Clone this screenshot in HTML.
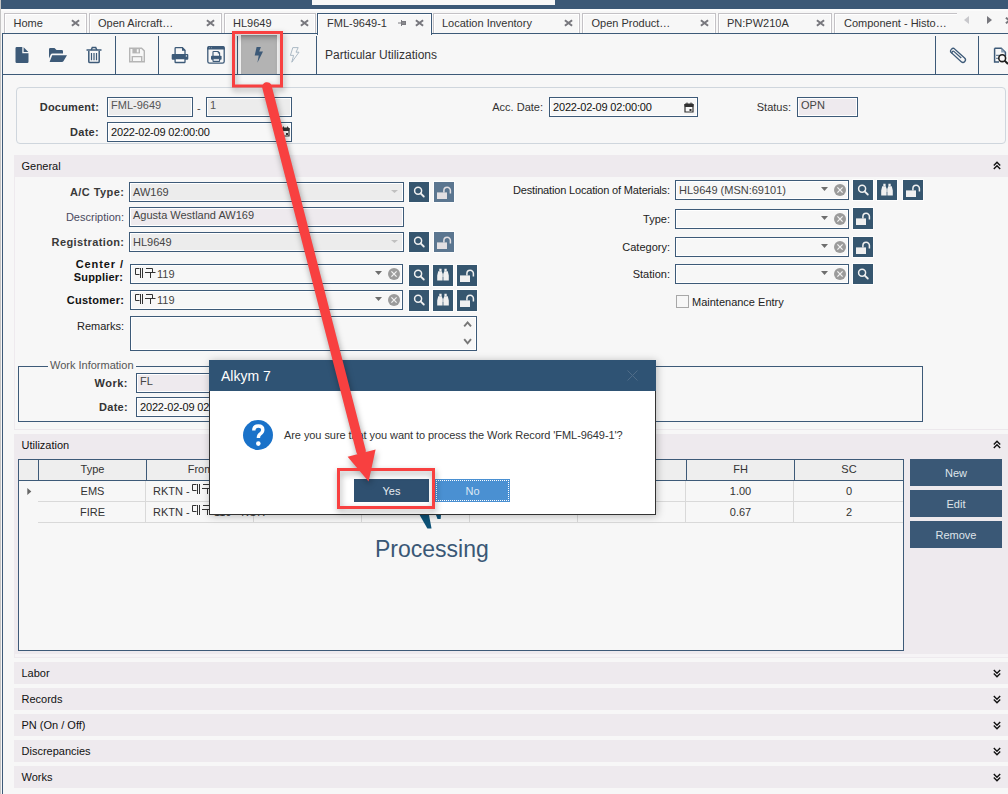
<!DOCTYPE html>
<html><head><meta charset="utf-8">
<style>
*{box-sizing:border-box;margin:0;padding:0}
html,body{width:1008px;height:794px;overflow:hidden;background:#f7f7f7;font-family:"Liberation Sans",sans-serif;font-size:11px;color:#222}
.a{position:absolute}
.t{position:absolute;white-space:nowrap;line-height:12px}
.tab{position:absolute;top:13px;height:21px;border:1px solid #c4c2c6;border-bottom:none;background:#f7f7f7;box-shadow:inset 1px 1px 0 #fff,inset -1px 0 0 #fff}
.tx{position:absolute;top:17px;line-height:12px;white-space:nowrap;color:#333;font-size:11px}
.cl{position:absolute;top:19px;width:9px;height:8px}
.sep{position:absolute;top:36px;width:1px;height:38px;background:#3d5a78}
.fld{position:absolute;border:1px solid #3d5a78;background:#f7f7f7;box-shadow:inset 0 0 0 1px #fff}
.gray{background:#ececec}
.pink{background:#eeeaee}
.hdr{position:absolute;left:14px;width:994px;height:22px;background:#eeeaee}
.hdr .t{left:7.5px;top:5px;color:#111}
.btn{position:absolute;width:20px;height:21px;background:#36566f}
.lbl{position:absolute;text-align:right;white-space:nowrap;line-height:12px;color:#222}
.b{font-weight:bold}
</style></head><body>
<!-- left window edge -->
<div class="a" style="left:0;top:0;width:1px;height:794px;background:#c4c4c4"></div>
<!-- top dark bar -->
<div class="a" style="left:1px;top:0;width:1007px;height:9px;background:#3b5876"></div>
<div class="a" style="left:312px;top:0;width:243px;height:5px;background:#f7f7f7"></div>
<div class="a" style="left:1px;top:9px;width:1007px;height:2px;background:#fbfbfb"></div>

<!-- TABS -->
<!--TABS-->
<div class="tab" style="left:4px;width:83px"></div>
<div class="tx" style="left:13.5px">Home</div>
<svg class="cl" style="left:71px" width="9" height="7" viewBox="0 0 9 7"><path d="M0.9 0.7L8.1 6.3M8.1 0.7L0.9 6.3" stroke="#77777d" stroke-width="2"/></svg>
<div class="tab" style="left:89px;width:133px"></div>
<div class="tx" style="left:98px">Open Aircraft…</div>
<svg class="cl" style="left:206px" width="9" height="7" viewBox="0 0 9 7"><path d="M0.9 0.7L8.1 6.3M8.1 0.7L0.9 6.3" stroke="#77777d" stroke-width="2"/></svg>
<div class="tab" style="left:224px;width:92px"></div>
<div class="tx" style="left:233px">HL9649</div>
<svg class="cl" style="left:300px" width="9" height="7" viewBox="0 0 9 7"><path d="M0.9 0.7L8.1 6.3M8.1 0.7L0.9 6.3" stroke="#77777d" stroke-width="2"/></svg>
<div class="tab" style="left:317px;width:115px;border-color:#3d5a78;height:22px"></div>
<div class="tx" style="left:327px">FML-9649-1</div>
<svg class="cl" style="left:415px" width="9" height="7" viewBox="0 0 9 7"><path d="M0.9 0.7L8.1 6.3M8.1 0.7L0.9 6.3" stroke="#77777d" stroke-width="2"/></svg>
<div class="tab" style="left:433px;width:147px"></div>
<div class="tx" style="left:442px">Location Inventory</div>
<svg class="cl" style="left:564px" width="9" height="7" viewBox="0 0 9 7"><path d="M0.9 0.7L8.1 6.3M8.1 0.7L0.9 6.3" stroke="#77777d" stroke-width="2"/></svg>
<div class="tab" style="left:582px;width:134px"></div>
<div class="tx" style="left:591.5px">Open Product…</div>
<svg class="cl" style="left:700px" width="9" height="7" viewBox="0 0 9 7"><path d="M0.9 0.7L8.1 6.3M8.1 0.7L0.9 6.3" stroke="#77777d" stroke-width="2"/></svg>
<div class="tab" style="left:718px;width:114px"></div>
<div class="tx" style="left:727px">PN:PW210A</div>
<svg class="cl" style="left:816px" width="9" height="7" viewBox="0 0 9 7"><path d="M0.9 0.7L8.1 6.3M8.1 0.7L0.9 6.3" stroke="#77777d" stroke-width="2"/></svg>
<div class="tab" style="left:834px;width:123px;border-right:none;box-shadow:inset 1px 1px 0 #fff"></div>
<div class="tx" style="left:844px">Component - Histo…</div>
<svg class="a" style="left:398px;top:20px" width="8" height="6" viewBox="0 0 8 6"><path d="M0 3H3M3.5 0V6" stroke="#7b7b80" stroke-width="1"/><path d="M4 1H8V5H4Z" fill="#7b7b80"/><path d="M4 3H7" stroke="#b0b0b0" stroke-width="0.6"/></svg>
<svg class="a" style="left:964px;top:16px" width="5" height="8" viewBox="0 0 5 8"><path d="M5 0V8L0 4Z" fill="#c8c8cc"/></svg>
<svg class="a" style="left:987px;top:16px" width="5" height="8" viewBox="0 0 5 8"><path d="M0 0V8L5 4Z" fill="#77777d"/></svg>
<svg class="a" style="left:1005px;top:17px" width="9" height="7" viewBox="0 0 9 7"><path d="M0.9 0.7L8.1 6.3M8.1 0.7L0.9 6.3" stroke="#77777d" stroke-width="2"/></svg>
<!--/TABS-->
<!-- toolbar frame -->
<div class="a" style="left:2px;top:33px;width:315px;height:1px;background:#3d5a78"></div>
<div class="a" style="left:431px;top:33px;width:577px;height:1px;background:#3d5a78"></div>
<div class="a" style="left:2px;top:33px;width:1px;height:761px;background:#3d5a78"></div>
<div class="a" style="left:3px;top:74px;width:1005px;height:1px;background:#3d5a78"></div>


<!-- toolbar separators -->
<div class="sep" style="left:115px"></div>
<div class="sep" style="left:158px"></div>
<div class="sep" style="left:237px"></div>
<div class="sep" style="left:316px"></div>
<div class="sep" style="left:935px"></div>
<div class="sep" style="left:978px"></div>
<!-- highlighted button -->
<div class="a" style="left:241px;top:35px;width:36px;height:39px;background:linear-gradient(#8e8e8e,#a8a8a8 2px,#b3b3b3 5px,#b3b3b3)"></div>
<svg class="a" style="left:0;top:0" width="1008" height="80" viewBox="0 0 1008 80">
 <g fill="#3d5a78">
  <!-- new doc -->
  <path d="M15.5 48.2Q15.5 47 16.7 47H22.3V53.2H28.5V61.8Q28.5 63 27.3 63H16.7Q15.5 63 15.5 61.8Z"/>
  <path d="M23.6 47.2L28.4 52H23.6Z"/>
  <!-- folder -->
  <path d="M49 49.2Q49 48 50.2 48H54.5L56.5 50H61.8Q63 50 63 51.2V53.6H52.6Q51.2 53.6 50.6 54.8L49 58.4Z"/>
  <path d="M52.2 55.2H67L63.4 61.2Q63 62 62 62H49.6Z"/>
  <!-- lightning in gray btn -->
  <path d="M256.6 47H260.9L259.2 51.6H263L257.4 62.8L258.7 55.4H254.7Z"/>
 </g>
 <!-- trash -->
 <g fill="none" stroke="#3d5a78" stroke-width="1.5">
  <path d="M86.5 50H101.5"/>
  <path d="M91.2 50L92.3 47.5H95.7L96.8 50"/>
  <path d="M88.8 51V61.4Q88.8 62.6 90 62.6H98Q99.2 62.6 99.2 61.4V51"/>
  <path d="M91.5 53V60.2M94 53V60.2M96.5 53V60.2" stroke-width="1.2"/>
 </g>
 <!-- print -->
 <path d="M175.1 54.3V48.5Q175.1 47.7 175.9 47.7H182.4L185 50.3V54.3" fill="none" stroke="#3d5a78" stroke-width="1.3"/>
 <path d="M182 47.3L185.5 50.8H182Z" fill="#3d5a78"/>
 <path d="M172.7 54H187.3Q188.3 54 188.3 55V58.8Q188.3 59.8 187.3 59.8H172.7Q171.7 59.8 171.7 58.8V55Q171.7 54 172.7 54Z" fill="#3d5a78"/>
 <circle cx="186.4" cy="55.9" r="0.7" fill="#fff"/>
 <rect x="175.1" y="58.6" width="9.9" height="3.9" rx="0.6" fill="#fff" stroke="#3d5a78" stroke-width="1.3"/>
 <!-- print preview -->
 <rect x="207.8" y="46.6" width="16.4" height="16.6" rx="1.8" fill="none" stroke="#3d5a78" stroke-width="1.3"/>
 <path d="M207.2 48Q207.2 46 209.2 46H222.8Q224.8 46 224.8 48V49.4H207.2Z" fill="#3d5a78"/>
 <path d="M209 47.7H210M211 47.7H212" stroke="#9fb0c0" stroke-width="0.7"/>
 <path d="M213 55.9V52Q213 51.5 213.5 51.5H218L219.6 53.1V55.9" fill="none" stroke="#3d5a78" stroke-width="1.1"/>
 <path d="M217.8 51.2L220 53.4H217.8Z" fill="#3d5a78"/>
 <path d="M211.8 55.8H220.8Q221.6 55.8 221.6 56.6V59Q221.6 59.8 220.8 59.8H211.8Q211 59.8 211 59V56.6Q211 55.8 211.8 55.8Z" fill="#3d5a78"/>
 <rect x="213" y="58.8" width="6.6" height="2.6" rx="0.4" fill="#fff" stroke="#3d5a78" stroke-width="1.1"/>
 <!-- save disabled -->
 <g fill="none" stroke="#b5b5b5" stroke-width="1.4">
  <path d="M129.7 48.2H141.6L144.3 50.9V61.8H129.7Z"/>
  <path d="M132.3 62V56.6H141.7V62"/>
 </g>
 <path d="M132.4 48.2H140V53.4H132.4Z" fill="#b5b5b5"/>
 <path d="M136.8 49.2H138.6V52.4H136.8Z" fill="#f7f7f7"/>
 <!-- outline lightning -->
 <path d="M292.8 47.6H298.2L296 52.2H299L291.8 62.2L293.6 55.4H290.4Z" fill="none" stroke="#a3b2c0" stroke-width="0.9"/>
 <!-- paperclip -->
 <g transform="translate(957 55) rotate(42)" fill="none" stroke="#3d5a78" stroke-width="1.3">
  <path d="M-1 -2.9H7.6A2.5 2.5 0 0 1 7.6 2.1H-6.8A2.5 2.9 0 0 1 -6.8 -2.9H-1"/>
  <path d="M5.2 -0.6H-4.4A1.35 1.35 0 0 0 -4.4 2.1"/>
 </g>
 <!-- doc search -->
 <path d="M994.6 48.2H1001.2L1005.4 52.4V56M994.6 48.2V62H999" fill="none" stroke="#3d5a78" stroke-width="1.5"/>
 <path d="M1001.2 48.2L1005.4 52.4H1001.2Z" fill="#8aa0b6"/>
 <path d="M996 55.3H1000.5M996 58.3H999" stroke="#6d8398" stroke-width="1.2"/>
 <circle cx="1002.2" cy="58.2" r="3.4" fill="none" stroke="#1e1e1e" stroke-width="1.6"/>
 <path d="M1004.6 60.6L1008 64" stroke="#1e1e1e" stroke-width="2"/>
</svg>
<div class="t" style="left:325px;top:48px;font-size:12px;line-height:14px;color:#333">Particular Utilizations</div>


<!-- document panel -->
<div class="a" style="left:16px;top:87px;width:990px;height:57px;border:1px solid #cfd6dd;border-radius:4px"></div>
<div class="lbl b" style="left:20px;top:101px;width:79px;color:#333;letter-spacing:0.2px">Document:</div>
<div class="fld gray" style="left:107px;top:97px;width:86px;height:20px"></div>
<div class="t" style="left:111px;top:99px;color:#555">FML-9649</div>
<div class="t" style="left:197px;top:102px;color:#444">-</div>
<div class="fld gray" style="left:206px;top:97px;width:86px;height:20px"></div>
<div class="t" style="left:210px;top:99px;color:#555">1</div>
<div class="lbl b" style="left:20px;top:126px;width:79px;color:#333;letter-spacing:0.3px">Date:</div>
<div class="fld" style="left:107px;top:122px;width:185px;height:20px"></div>
<div class="t" style="left:111px;top:126px;color:#111;letter-spacing:-0.18px">2022-02-09 02:00:00</div>
<svg class="a" style="left:281px;top:126px" width="9" height="11" viewBox="0 0 9 11"><path d="M1 2.5H8V10H1Z" fill="none" stroke="#333" stroke-width="1.2"/><path d="M1 2H8V4.5H1Z M2.5 0.5V2.5M6.5 0.5V2.5" fill="#333" stroke="#333" stroke-width="1"/><path d="M5 7H7V9H5Z" fill="#333"/></svg>

<div class="lbl" style="left:470px;top:101px;width:73px;color:#333">Acc. Date:</div>
<div class="fld" style="left:549px;top:97px;width:149px;height:20px"></div>
<div class="t" style="left:553px;top:101px;color:#111;letter-spacing:-0.18px">2022-02-09 02:00:00</div>
<svg class="a" style="left:684px;top:102px" width="10" height="11" viewBox="0 0 10 11"><path d="M1 2.5H9V10H1Z" fill="none" stroke="#333" stroke-width="1.2"/><path d="M1 2H9V4.5H1Z M3 0.5V2.5M7 0.5V2.5" fill="#333" stroke="#333" stroke-width="1"/><path d="M5.5 7H7.5V9H5.5Z" fill="#333"/></svg>
<div class="lbl" style="left:720px;top:101px;width:71px;color:#333">Status:</div>
<div class="fld pink" style="left:797px;top:97px;width:61px;height:20px"></div>
<div class="t" style="left:801px;top:99px;color:#444">OPN</div>

<!-- General -->
<div class="hdr" style="top:155px"><div class="t" style="top:5px">General</div></div>
<svg class="a" style="left:993px;top:161px" width="8" height="9" viewBox="0 0 8 9"><path d="M0.8 4.5L4 1.3L7.2 4.5M0.8 8L4 4.8L7.2 8" fill="none" stroke="#111" stroke-width="1.4"/></svg>
<div class="a" style="left:14px;top:177px;width:1px;height:252px;background:#eeeaee"></div>
<div class="a" style="left:14px;top:429px;width:994px;height:1px;background:#ece8ec"></div>

<!--GEN-->
<div class="lbl b" style="left:-75.55px;top:186px;width:200px;color:#3a3a3a;letter-spacing:0.45px">A/C Type:</div>
<div class="fld gray" style="left:129px;top:182px;width:275px;height:20px"></div><svg class="a" style="left:391px;top:190px" width="7" height="3" viewBox="0 0 7 3"><path d="M0 0H7L3.5 3Z" fill="#c0c0c0"/></svg>
<div class="t" style="left:133px;top:186px;color:#444">AW169</div>
<svg class="a" style="left:409px;top:182px" width="20" height="20" viewBox="0 0 20 20"><rect width="20" height="20" fill="#36566f"/><circle cx="9.1" cy="8.8" r="3.5" fill="none" stroke="#f0f0f0" stroke-width="1.5"/><path d="M11.6 11.3L14.8 14.5" stroke="#f0f0f0" stroke-width="1.8" stroke-linecap="round"/></svg><div class="a" style="left:408px;top:181px;width:22px;height:22px;border:1px solid #fdfdfd"></div>
<svg class="a" style="left:434px;top:182px" width="20" height="20" viewBox="0 0 20 20"><rect width="20" height="20" fill="#5b7690"/><path d="M3 10.4H13V17H3Z" fill="#e2dfe2"/><path d="M9.9 10.4V8.6A3.25 3.25 0 0 1 16.4 8.6V11.6" fill="none" stroke="#e2dfe2" stroke-width="1.5"/></svg><div class="a" style="left:433px;top:181px;width:22px;height:22px;border:1px solid #fdfdfd"></div>
<div class="lbl" style="left:-76px;top:211px;width:200px;color:#4a4a60">Description:</div>
<div class="fld pink" style="left:129px;top:207px;width:275px;height:20px"></div>
<div class="t" style="left:133px;top:209px;color:#444">Agusta Westland AW169</div>
<div class="lbl b" style="left:-75.62px;top:236px;width:200px;color:#3a3a3a;letter-spacing:0.38px">Registration:</div>
<div class="fld gray" style="left:129px;top:232px;width:275px;height:20px"></div><svg class="a" style="left:391px;top:240px" width="7" height="3" viewBox="0 0 7 3"><path d="M0 0H7L3.5 3Z" fill="#c0c0c0"/></svg>
<div class="t" style="left:133px;top:236px;color:#444">HL9649</div>
<svg class="a" style="left:409px;top:232px" width="20" height="20" viewBox="0 0 20 20"><rect width="20" height="20" fill="#36566f"/><circle cx="9.1" cy="8.8" r="3.5" fill="none" stroke="#f0f0f0" stroke-width="1.5"/><path d="M11.6 11.3L14.8 14.5" stroke="#f0f0f0" stroke-width="1.8" stroke-linecap="round"/></svg><div class="a" style="left:408px;top:231px;width:22px;height:22px;border:1px solid #fdfdfd"></div>
<svg class="a" style="left:434px;top:232px" width="20" height="20" viewBox="0 0 20 20"><rect width="20" height="20" fill="#5b7690"/><path d="M3 10.4H13V17H3Z" fill="#e2dfe2"/><path d="M9.9 10.4V8.6A3.25 3.25 0 0 1 16.4 8.6V11.6" fill="none" stroke="#e2dfe2" stroke-width="1.5"/></svg><div class="a" style="left:433px;top:231px;width:22px;height:22px;border:1px solid #fdfdfd"></div>
<div class="lbl b" style="left:-76.1px;top:258px;width:200px;color:#111;letter-spacing:0.9px">Center /</div>
<div class="lbl b" style="left:-76.8px;top:271px;width:200px;color:#111;letter-spacing:0.2px">Supplier:</div>
<div class="fld " style="left:130px;top:264px;width:273px;height:20px"></div><svg class="a" style="left:375px;top:271px" width="7" height="4" viewBox="0 0 7 4"><path d="M0 0H7L3.5 4Z" fill="#6e6e6e"/></svg><svg class="a" style="left:388px;top:268px" width="12" height="12" viewBox="0 0 12 12"><circle cx="6" cy="6" r="6" fill="#9b9b9b"/><path d="M3.4 3.4L8.6 8.6M8.6 3.4L3.4 8.6" stroke="#f4f4f4" stroke-width="1.2"/></svg>
<svg class="a" style="left:135px;top:268px" width="21" height="11" viewBox="0 0 21 11"><path d="M4.5 0.5H0.5V6.5H4.5M5.5 0V10M7.5 0V10M11 0.5H17.5V4.5M10 4.5H20.5M15.5 4.5V10" fill="none" stroke="#333" stroke-width="1"/></svg><div class="t" style="left:157px;top:268px;color:#444">119</div>
<svg class="a" style="left:409px;top:265px" width="20" height="21" viewBox="0 0 20 21"><rect width="20" height="21" fill="#36566f"/><circle cx="9.1" cy="8.8" r="3.5" fill="none" stroke="#f0f0f0" stroke-width="1.5"/><path d="M11.6 11.3L14.8 14.5" stroke="#f0f0f0" stroke-width="1.8" stroke-linecap="round"/></svg><div class="a" style="left:408px;top:264px;width:22px;height:23px;border:1px solid #fdfdfd"></div>
<svg class="a" style="left:433px;top:265px" width="20" height="21" viewBox="0 0 20 21"><rect width="20" height="21" fill="#36566f"/><path d="M5.2 6.2H8.8L9.6 9V15.6H4.2V10.6Z M10.4 9L11.2 6.2H14.8L15.8 10.6V15.6H10.4Z" fill="#f0f0f0"/><path d="M6.3 3.8H8.6V6.2H6.3Z M11.4 3.8H13.7V6.2H11.4Z" fill="#f0f0f0"/><path d="M9.4 8.5H10.6V12H9.4Z" fill="#f0f0f0" opacity="0.8"/></svg><div class="a" style="left:432px;top:264px;width:22px;height:23px;border:1px solid #fdfdfd"></div>
<svg class="a" style="left:457px;top:265px" width="20" height="21" viewBox="0 0 20 21"><rect width="20" height="21" fill="#36566f"/><path d="M3 10.4H13V17H3Z" fill="#f0f0f0"/><path d="M9.9 10.4V8.6A3.25 3.25 0 0 1 16.4 8.6V11.6" fill="none" stroke="#f0f0f0" stroke-width="1.5"/></svg><div class="a" style="left:456px;top:264px;width:22px;height:23px;border:1px solid #fdfdfd"></div>
<div class="lbl b" style="left:-75.72px;top:294px;width:200px;color:#111;letter-spacing:0.28px">Customer:</div>
<div class="fld " style="left:130px;top:290px;width:273px;height:20px"></div><svg class="a" style="left:375px;top:297px" width="7" height="4" viewBox="0 0 7 4"><path d="M0 0H7L3.5 4Z" fill="#6e6e6e"/></svg><svg class="a" style="left:388px;top:294px" width="12" height="12" viewBox="0 0 12 12"><circle cx="6" cy="6" r="6" fill="#9b9b9b"/><path d="M3.4 3.4L8.6 8.6M8.6 3.4L3.4 8.6" stroke="#f4f4f4" stroke-width="1.2"/></svg>
<svg class="a" style="left:135px;top:294px" width="21" height="11" viewBox="0 0 21 11"><path d="M4.5 0.5H0.5V6.5H4.5M5.5 0V10M7.5 0V10M11 0.5H17.5V4.5M10 4.5H20.5M15.5 4.5V10" fill="none" stroke="#333" stroke-width="1"/></svg><div class="t" style="left:157px;top:294px;color:#444">119</div>
<svg class="a" style="left:409px;top:290px" width="20" height="21" viewBox="0 0 20 21"><rect width="20" height="21" fill="#36566f"/><circle cx="9.1" cy="8.8" r="3.5" fill="none" stroke="#f0f0f0" stroke-width="1.5"/><path d="M11.6 11.3L14.8 14.5" stroke="#f0f0f0" stroke-width="1.8" stroke-linecap="round"/></svg><div class="a" style="left:408px;top:289px;width:22px;height:23px;border:1px solid #fdfdfd"></div>
<svg class="a" style="left:433px;top:290px" width="20" height="21" viewBox="0 0 20 21"><rect width="20" height="21" fill="#36566f"/><path d="M5.2 6.2H8.8L9.6 9V15.6H4.2V10.6Z M10.4 9L11.2 6.2H14.8L15.8 10.6V15.6H10.4Z" fill="#f0f0f0"/><path d="M6.3 3.8H8.6V6.2H6.3Z M11.4 3.8H13.7V6.2H11.4Z" fill="#f0f0f0"/><path d="M9.4 8.5H10.6V12H9.4Z" fill="#f0f0f0" opacity="0.8"/></svg><div class="a" style="left:432px;top:289px;width:22px;height:23px;border:1px solid #fdfdfd"></div>
<svg class="a" style="left:457px;top:290px" width="20" height="21" viewBox="0 0 20 21"><rect width="20" height="21" fill="#36566f"/><path d="M3 10.4H13V17H3Z" fill="#f0f0f0"/><path d="M9.9 10.4V8.6A3.25 3.25 0 0 1 16.4 8.6V11.6" fill="none" stroke="#f0f0f0" stroke-width="1.5"/></svg><div class="a" style="left:456px;top:289px;width:22px;height:23px;border:1px solid #fdfdfd"></div>
<div class="lbl" style="left:-76px;top:320px;width:200px;color:#222">Remarks:</div>
<div class="fld" style="left:130px;top:316px;width:347px;height:35px"></div>
<svg class="a" style="left:463px;top:320px" width="9" height="26" viewBox="0 0 9 26"><path d="M1.2 6.4L4.6 2.4L8 6.4M1.2 19.2L4.6 23.3L8 19.2" fill="none" stroke="#777" stroke-width="1.9"/></svg>
<div class="lbl" style="left:449.83px;top:184px;width:220px;color:#222;letter-spacing:-0.17px">Destination Location of Materials:</div>
<div class="fld " style="left:675px;top:180px;width:174px;height:20px"></div><svg class="a" style="left:821px;top:187px" width="7" height="4" viewBox="0 0 7 4"><path d="M0 0H7L3.5 4Z" fill="#6e6e6e"/></svg><svg class="a" style="left:834px;top:184px" width="12" height="12" viewBox="0 0 12 12"><circle cx="6" cy="6" r="6" fill="#9b9b9b"/><path d="M3.4 3.4L8.6 8.6M8.6 3.4L3.4 8.6" stroke="#f4f4f4" stroke-width="1.2"/></svg>
<div class="t" style="left:679px;top:184px;color:#444">HL9649 (MSN:69101)</div>
<svg class="a" style="left:853px;top:180px" width="20" height="20" viewBox="0 0 20 20"><rect width="20" height="20" fill="#36566f"/><circle cx="9.1" cy="8.8" r="3.5" fill="none" stroke="#f0f0f0" stroke-width="1.5"/><path d="M11.6 11.3L14.8 14.5" stroke="#f0f0f0" stroke-width="1.8" stroke-linecap="round"/></svg><div class="a" style="left:852px;top:179px;width:22px;height:22px;border:1px solid #fdfdfd"></div>
<svg class="a" style="left:877px;top:180px" width="20" height="20" viewBox="0 0 20 20"><rect width="20" height="20" fill="#36566f"/><path d="M5.2 6.2H8.8L9.6 9V15.6H4.2V10.6Z M10.4 9L11.2 6.2H14.8L15.8 10.6V15.6H10.4Z" fill="#f0f0f0"/><path d="M6.3 3.8H8.6V6.2H6.3Z M11.4 3.8H13.7V6.2H11.4Z" fill="#f0f0f0"/><path d="M9.4 8.5H10.6V12H9.4Z" fill="#f0f0f0" opacity="0.8"/></svg><div class="a" style="left:876px;top:179px;width:22px;height:22px;border:1px solid #fdfdfd"></div>
<svg class="a" style="left:903px;top:180px" width="20" height="20" viewBox="0 0 20 20"><rect width="20" height="20" fill="#36566f"/><path d="M3 10.4H13V17H3Z" fill="#f0f0f0"/><path d="M9.9 10.4V8.6A3.25 3.25 0 0 1 16.4 8.6V11.6" fill="none" stroke="#f0f0f0" stroke-width="1.5"/></svg><div class="a" style="left:902px;top:179px;width:22px;height:22px;border:1px solid #fdfdfd"></div>
<div class="lbl" style="left:470px;top:213px;width:200px;color:#222">Type:</div>
<div class="fld " style="left:675px;top:209px;width:174px;height:20px"></div><svg class="a" style="left:821px;top:216px" width="7" height="4" viewBox="0 0 7 4"><path d="M0 0H7L3.5 4Z" fill="#6e6e6e"/></svg><svg class="a" style="left:834px;top:213px" width="12" height="12" viewBox="0 0 12 12"><circle cx="6" cy="6" r="6" fill="#9b9b9b"/><path d="M3.4 3.4L8.6 8.6M8.6 3.4L3.4 8.6" stroke="#f4f4f4" stroke-width="1.2"/></svg>
<svg class="a" style="left:853px;top:208px" width="20" height="21" viewBox="0 0 20 21"><rect width="20" height="21" fill="#36566f"/><path d="M3 10.4H13V17H3Z" fill="#f0f0f0"/><path d="M9.9 10.4V8.6A3.25 3.25 0 0 1 16.4 8.6V11.6" fill="none" stroke="#f0f0f0" stroke-width="1.5"/></svg><div class="a" style="left:852px;top:207px;width:22px;height:23px;border:1px solid #fdfdfd"></div>
<div class="lbl" style="left:470px;top:241px;width:200px;color:#222">Category:</div>
<div class="fld " style="left:675px;top:237px;width:174px;height:20px"></div><svg class="a" style="left:821px;top:244px" width="7" height="4" viewBox="0 0 7 4"><path d="M0 0H7L3.5 4Z" fill="#6e6e6e"/></svg><svg class="a" style="left:834px;top:241px" width="12" height="12" viewBox="0 0 12 12"><circle cx="6" cy="6" r="6" fill="#9b9b9b"/><path d="M3.4 3.4L8.6 8.6M8.6 3.4L3.4 8.6" stroke="#f4f4f4" stroke-width="1.2"/></svg>
<svg class="a" style="left:853px;top:237px" width="20" height="20" viewBox="0 0 20 20"><rect width="20" height="20" fill="#36566f"/><path d="M3 10.4H13V17H3Z" fill="#f0f0f0"/><path d="M9.9 10.4V8.6A3.25 3.25 0 0 1 16.4 8.6V11.6" fill="none" stroke="#f0f0f0" stroke-width="1.5"/></svg><div class="a" style="left:852px;top:236px;width:22px;height:22px;border:1px solid #fdfdfd"></div>
<div class="lbl" style="left:470px;top:268px;width:200px;color:#222">Station:</div>
<div class="fld " style="left:675px;top:264px;width:174px;height:20px"></div><svg class="a" style="left:821px;top:271px" width="7" height="4" viewBox="0 0 7 4"><path d="M0 0H7L3.5 4Z" fill="#6e6e6e"/></svg><svg class="a" style="left:834px;top:268px" width="12" height="12" viewBox="0 0 12 12"><circle cx="6" cy="6" r="6" fill="#9b9b9b"/><path d="M3.4 3.4L8.6 8.6M8.6 3.4L3.4 8.6" stroke="#f4f4f4" stroke-width="1.2"/></svg>
<svg class="a" style="left:853px;top:264px" width="20" height="20" viewBox="0 0 20 20"><rect width="20" height="20" fill="#36566f"/><circle cx="9.1" cy="8.8" r="3.5" fill="none" stroke="#f0f0f0" stroke-width="1.5"/><path d="M11.6 11.3L14.8 14.5" stroke="#f0f0f0" stroke-width="1.8" stroke-linecap="round"/></svg><div class="a" style="left:852px;top:263px;width:22px;height:22px;border:1px solid #fdfdfd"></div>
<div class="a" style="left:676px;top:295px;width:13px;height:13px;border:1px solid #a8a8a8;background:#f7f7f7"></div>
<div class="t" style="left:692px;top:296px;color:#222">Maintenance Entry</div>
<!--/GEN-->
<!--LOWER-->
<div class="a" style="left:18px;top:366px;width:905px;height:56px;border:1px solid #3d5a78"></div>
<div class="t" style="left:48px;top:359px;padding:0 2px;background:#f7f7f7;color:#555">Work Information</div>
<div class="lbl b" style="left:28px;top:377px;width:100px;color:#333;letter-spacing:0.5px">Work:</div>
<div class="fld pink" style="left:136px;top:373px;width:276px;height:20px"></div>
<div class="t" style="left:140px;top:375px;color:#444">FL</div>
<div class="lbl b" style="left:28px;top:401px;width:100px;color:#333;letter-spacing:0.3px">Date:</div>
<div class="fld" style="left:136px;top:397px;width:276px;height:20px"></div>
<div class="t" style="left:140px;top:401px;color:#111;letter-spacing:-0.18px">2022-02-09 02:00:00</div>
<div class="hdr" style="top:434px;height:224px"><div class="t" style="top:5px">Utilization</div></div>
<svg class="a" style="left:993px;top:440px" width="8" height="9" viewBox="0 0 8 9"><path d="M0.8 4.5L4 1.3L7.2 4.5M0.8 8L4 4.8L7.2 8" fill="none" stroke="#111" stroke-width="1.4"/></svg>
<div class="a" style="left:15px;top:654px;width:993px;height:3px;background:#f6f4f6"></div>
<div class="a" style="left:18px;top:459px;width:886px;height:192px;border:1px solid #3d5a78;background:#f7f7f7"></div>
<div class="a" style="left:19px;top:460px;width:884px;height:21px;background:#eeeeee;border-bottom:1px solid #3d5a78"></div>
<div class="a" style="left:38px;top:460px;width:1px;height:20px;background:#3d5a78"></div>
<div class="a" style="left:146px;top:460px;width:1px;height:20px;background:#3d5a78"></div>
<div class="a" style="left:145px;top:481px;width:1px;height:41px;background:#d9d9d9"></div>
<div class="a" style="left:254px;top:460px;width:1px;height:20px;background:#3d5a78"></div>
<div class="a" style="left:253px;top:481px;width:1px;height:41px;background:#d9d9d9"></div>
<div class="a" style="left:362px;top:460px;width:1px;height:20px;background:#3d5a78"></div>
<div class="a" style="left:361px;top:481px;width:1px;height:41px;background:#d9d9d9"></div>
<div class="a" style="left:470px;top:460px;width:1px;height:20px;background:#3d5a78"></div>
<div class="a" style="left:469px;top:481px;width:1px;height:41px;background:#d9d9d9"></div>
<div class="a" style="left:578px;top:460px;width:1px;height:20px;background:#3d5a78"></div>
<div class="a" style="left:577px;top:481px;width:1px;height:41px;background:#d9d9d9"></div>
<div class="a" style="left:686px;top:460px;width:1px;height:20px;background:#3d5a78"></div>
<div class="a" style="left:685px;top:481px;width:1px;height:41px;background:#d9d9d9"></div>
<div class="a" style="left:794px;top:460px;width:1px;height:20px;background:#3d5a78"></div>
<div class="a" style="left:793px;top:481px;width:1px;height:41px;background:#d9d9d9"></div>
<div class="a" style="left:38px;top:501px;width:865px;height:1px;background:#d9d9d9"></div>
<div class="a" style="left:38px;top:522px;width:865px;height:1px;background:#d9d9d9"></div>
<div class="t" style="left:39px;width:107px;top:463px;text-align:center;color:#333">Type</div>
<div class="t" style="left:147px;width:107px;top:463px;text-align:center;color:#333">From</div>
<div class="t" style="left:255px;width:107px;top:463px;text-align:center;color:#333">To</div>
<div class="t" style="left:363px;width:107px;top:463px;text-align:center;color:#333">Date</div>
<div class="t" style="left:471px;width:107px;top:463px;text-align:center;color:#333">Time</div>
<div class="t" style="left:579px;width:107px;top:463px;text-align:center;color:#333">Place</div>
<div class="t" style="left:687px;width:107px;top:463px;text-align:center;color:#333">FH</div>
<div class="t" style="left:795px;width:108px;top:463px;text-align:center;color:#333">SC</div>
<div class="t" style="left:39px;width:107px;top:485px;text-align:center;color:#333">EMS</div>
<div class="t" style="left:153px;top:485px;color:#333">RKTN - </div>
<svg class="a" style="left:192px;top:484px" width="21" height="11" viewBox="0 0 21 11"><path d="M4.5 0.5H0.5V6.5H4.5M5.5 0V10M7.5 0V10M11 0.5H17.5V4.5M10 4.5H20.5M15.5 4.5V10" fill="none" stroke="#333" stroke-width="1"/></svg>
<div class="t" style="left:214px;top:485px;color:#333">119 - KOR</div>
<div class="t" style="left:687px;width:107px;top:485px;text-align:center;color:#333">1.00</div>
<div class="t" style="left:795px;width:108px;top:485px;text-align:center;color:#333">0</div>
<div class="t" style="left:39px;width:107px;top:506px;text-align:center;color:#333">FIRE</div>
<div class="t" style="left:153px;top:506px;color:#333">RKTN - </div>
<svg class="a" style="left:192px;top:505px" width="21" height="11" viewBox="0 0 21 11"><path d="M4.5 0.5H0.5V6.5H4.5M5.5 0V10M7.5 0V10M11 0.5H17.5V4.5M10 4.5H20.5M15.5 4.5V10" fill="none" stroke="#333" stroke-width="1"/></svg>
<div class="t" style="left:214px;top:506px;color:#333">119 - KOR</div>
<div class="t" style="left:687px;width:107px;top:506px;text-align:center;color:#333">0.67</div>
<div class="t" style="left:795px;width:108px;top:506px;text-align:center;color:#333">2</div>
<svg class="a" style="left:27px;top:488px" width="5" height="7" viewBox="0 0 5 7"><path d="M0.3 0L4.3 3.5L0.3 7Z" fill="#666"/></svg>
<div class="a" style="left:910px;top:459px;width:92px;height:27px;background:#3a5876;color:#dfe4ea;text-align:center;line-height:29px;font-size:11px">New</div>
<div class="a" style="left:910px;top:490px;width:92px;height:27px;background:#3a5876;color:#dfe4ea;text-align:center;line-height:29px;font-size:11px">Edit</div>
<div class="a" style="left:910px;top:521px;width:92px;height:27px;background:#3a5876;color:#dfe4ea;text-align:center;line-height:29px;font-size:11px">Remove</div>
<div class="t" style="left:375px;top:536px;font-size:23px;line-height:26px;color:#3a5876">Processing</div>
<svg class="a" style="left:418px;top:514px" width="26" height="16" viewBox="0 0 26 16"><path d="M1.6 1H11L13.5 14.6H9.4Z" fill="#0e5277"/><path d="M18 1H23L22.6 5H19.5Z" fill="#0e5277"/></svg>
<div class="hdr" style="top:662px"><div class="t" style="top:5px">Labor</div></div>
<svg class="a" style="left:993px;top:669px" width="8" height="9" viewBox="0 0 8 9"><path d="M0.8 1L4 4.2L7.2 1M0.8 4.5L4 7.7L7.2 4.5" fill="none" stroke="#111" stroke-width="1.4"/></svg>
<div class="hdr" style="top:688px"><div class="t" style="top:5px">Records</div></div>
<svg class="a" style="left:993px;top:695px" width="8" height="9" viewBox="0 0 8 9"><path d="M0.8 1L4 4.2L7.2 1M0.8 4.5L4 7.7L7.2 4.5" fill="none" stroke="#111" stroke-width="1.4"/></svg>
<div class="hdr" style="top:714px"><div class="t" style="top:5px">PN (On / Off)</div></div>
<svg class="a" style="left:993px;top:721px" width="8" height="9" viewBox="0 0 8 9"><path d="M0.8 1L4 4.2L7.2 1M0.8 4.5L4 7.7L7.2 4.5" fill="none" stroke="#111" stroke-width="1.4"/></svg>
<div class="hdr" style="top:740px"><div class="t" style="top:5px">Discrepancies</div></div>
<svg class="a" style="left:993px;top:747px" width="8" height="9" viewBox="0 0 8 9"><path d="M0.8 1L4 4.2L7.2 1M0.8 4.5L4 7.7L7.2 4.5" fill="none" stroke="#111" stroke-width="1.4"/></svg>
<div class="hdr" style="top:766px"><div class="t" style="top:5px">Works</div></div>
<svg class="a" style="left:993px;top:773px" width="8" height="9" viewBox="0 0 8 9"><path d="M0.8 1L4 4.2L7.2 1M0.8 4.5L4 7.7L7.2 4.5" fill="none" stroke="#111" stroke-width="1.4"/></svg>
<!--/LOWER-->
<!--DIALOG-->
<div class="a" style="left:209px;top:360px;width:447px;height:155px;border:1px solid #333;border-top:none;background:#fff;box-shadow:1px 1px 8px rgba(0,0,0,0.26)"></div>
<div class="a" style="left:209px;top:360px;width:447px;height:31px;background:#2f5374"></div>
<div class="t" style="left:221px;top:368px;font-size:14px;line-height:16px;color:#fff">Alkym 7</div>
<svg class="a" style="left:627px;top:370px" width="11" height="11" viewBox="0 0 11 11"><path d="M0.5 0.5L10.5 10.5M10.5 0.5L0.5 10.5" stroke="#4f6c88" stroke-width="1"/></svg>
<svg class="a" style="left:243px;top:420px" width="30" height="30" viewBox="0 0 30 30"><circle cx="15" cy="15" r="15" fill="#1a72c9"/><path d="M10.8 10.4Q10.8 6 15.3 6Q19.8 6 19.8 9.8Q19.8 12.2 17.4 13.8Q15.4 15.1 15.4 18" fill="none" stroke="#fff" stroke-width="3.4"/><circle cx="15.3" cy="23.6" r="2.3" fill="#fff"/></svg>
<div class="t" style="left:284px;top:429px;color:#333;letter-spacing:-0.07px">Are you sure that you want to process the Work Record 'FML-9649-1'?</div>
<div class="a" style="left:354px;top:479px;width:75px;height:23px;background:#2f5070;color:#e8ecf0;text-align:center;line-height:25px;font-size:11px">Yes</div>
<div class="a" style="left:435px;top:479px;width:75px;height:23px;background:#4a90d2;color:#dde8f4;text-align:center;line-height:25px;font-size:11px"><div class="a" style="left:1px;top:1px;right:1px;bottom:1px;border:1px dotted #fff"></div>No</div>
<svg class="a" style="left:0;top:0;filter:drop-shadow(1px 3px 3px rgba(0,0,0,0.35))" width="1008" height="794" viewBox="0 0 1008 794">
<rect x="233.5" y="32.5" width="48" height="53.5" fill="none" stroke="#f84040" stroke-width="3"/>
<rect x="338.5" y="469.5" width="95" height="38" fill="none" stroke="#f84040" stroke-width="3"/>
<path d="M267 87L361 451" stroke="#f84040" stroke-width="9.6" stroke-linecap="round"/>
<path d="M347.6 456.7L375.6 449.6L368.6 481.4Z" fill="#f84040"/>
</svg>
<!--/DIALOG-->
</body></html>
